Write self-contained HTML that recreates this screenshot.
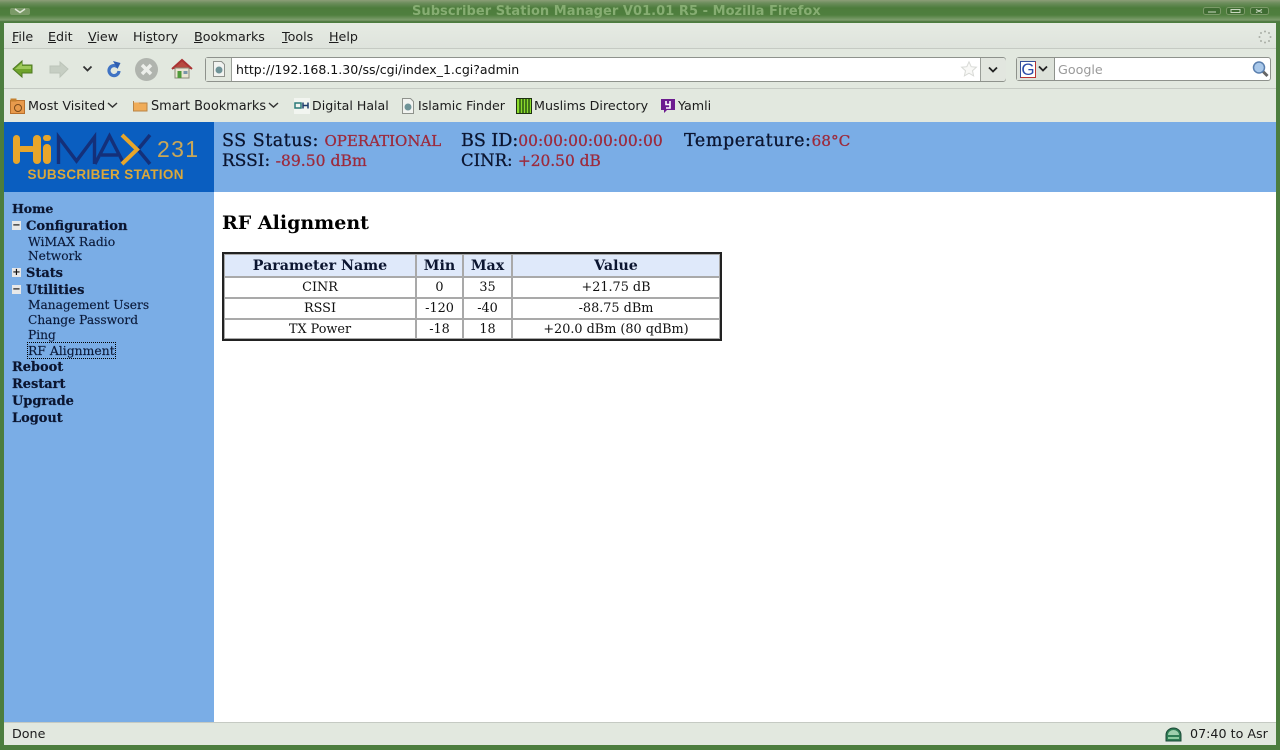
<!DOCTYPE html>
<html><head><meta charset="utf-8"><title>Subscriber Station Manager V01.01 R5 - Mozilla Firefox</title>
<style>
html,body{margin:0;padding:0;width:1280px;height:750px;overflow:hidden;background:#fff}
.a{position:absolute;white-space:nowrap}
.s{font-family:"DejaVu Sans","Liberation Sans",sans-serif;font-size:12.7px;color:#1c1c1c;line-height:16px}
.f{font-family:"DejaVu Serif","Liberation Serif",serif;color:#0b1530}
.h{-webkit-text-stroke:.3px currentColor}
.r{color:#9c2a3c}
.b{font-weight:bold;font-size:12.95px;line-height:17px;left:12px;-webkit-text-stroke:.2px currentColor}
.n{font-size:12.2px;line-height:15px;left:28px;color:#0b1a3a;-webkit-text-stroke:.15px currentColor}
.bx{position:absolute;left:12px;width:9px;height:9px;background:#e8e8e8;font:bold 10px/9px "DejaVu Sans",sans-serif;text-align:center;color:#111}
u{text-decoration:underline}
svg{position:absolute;overflow:visible}
td,th{padding:0;text-align:center;border:1px solid #a9a9a9}
</style></head>
<body>
<div class="a" style="left:0;top:0;width:1280px;height:750px;background:#4c7d3e"></div>
<div class="a" style="left:0;top:0;width:1280px;height:22px;background:linear-gradient(#8c9e78 0,#6c8d5c 3px,#4d7c3c 8px,#4f7f3e 15px,#7d9d6c 20px,#456f38 22px)"></div>
<div class="a" style="left:412px;top:4px;font:bold 13px/16px 'DejaVu Sans',sans-serif;color:#86ad72;letter-spacing:.04px">Subscriber Station Manager V01.01 R5 - Mozilla Firefox</div>
<svg style="left:0;top:0" width="40" height="22"><rect x="10" y="8" width="20" height="7" rx="2" fill="#7b9a68"/><path d="M15 9l5 3.500 5-3.500" stroke="#e0e8d8" stroke-width="1.500" fill="none"/></svg>
<svg style="left:1200px;top:5px" width="72" height="12"><g fill="#3f6c32" stroke="#7b9a68"><rect x="3.500" y="2.500" width="17" height="7" rx="2"/><rect x="26.500" y="2.500" width="18" height="7" rx="2"/><rect x="50.500" y="2.500" width="18" height="7" rx="2"/></g><path d="M8 7h8M31 4.500h9v3h-9zM56 4.500l6 3M62 4.500l-6 3" stroke="#c9d8c0" stroke-width="1" fill="none"/></svg>

<div class="a" style="left:4px;top:23px;width:1272px;height:99px;background:#e2e8df"></div>
<div class="a" style="left:4px;top:23px;width:1272px;height:26px;background:linear-gradient(#e6ebe3,#dee3dc)"></div>
<div class="a" style="left:4px;top:48px;width:1272px;height:1px;background:#c5cac3"></div>
<div class="a" style="left:4px;top:88px;width:1272px;height:1px;background:#c5cac3"></div>

<div class="a s" style="left:12px;top:29px"><u>F</u>ile</div>
<div class="a s" style="left:48px;top:29px"><u>E</u>dit</div>
<div class="a s" style="left:88px;top:29px"><u>V</u>iew</div>
<div class="a s" style="left:133px;top:29px">Hi<u>s</u>tory</div>
<div class="a s" style="left:194px;top:29px"><u>B</u>ookmarks</div>
<div class="a s" style="left:282px;top:29px"><u>T</u>ools</div>
<div class="a s" style="left:329px;top:29px"><u>H</u>elp</div>
<svg style="left:1258px;top:30px" width="14" height="14"><g fill="#a9aea6"><circle cx="7" cy="1.500" r="1"/><circle cx="11" cy="3" r="1"/><circle cx="12.500" cy="7" r="1"/><circle cx="11" cy="11" r="1"/><circle cx="7" cy="12.500" r="1"/><circle cx="3" cy="11" r="1"/><circle cx="1.500" cy="7" r="1"/><circle cx="3" cy="3" r="1"/></g></svg>

<!-- nav icons -->
<svg style="left:12px;top:59px" width="22" height="20"><path d="M1 10L10 2v4h10v8H10v4z" fill="#6fa32c" stroke="#4d7a22" stroke-width="1"/><path d="M3 10L10 4v3h9v3H3z" fill="#9cc85a"/></svg>
<svg style="left:49px;top:60px" width="20" height="18"><path d="M19 9L11 2v4H1v7h10v4z" fill="#c6cec3" stroke="#bcc4b9"/></svg>
<svg style="left:82px;top:65px" width="12" height="8"><path d="M1.500 1.500L5.500 5.500 9.500 1.500" stroke="#333" stroke-width="1.800" fill="none"/></svg>
<svg style="left:106px;top:61px" width="16" height="16"><path d="M11.500 6a5 5 0 1 0 1.500 4" stroke="#3f73c4" stroke-width="3.200" fill="none"/><path d="M7 0l7.500 2-3 6z" fill="#2f5fb0"/></svg>
<svg style="left:134px;top:57px" width="25" height="25"><circle cx="12.500" cy="12.500" r="11.500" fill="#b0b4ae"/><path d="M8 8l9 9M17 8l-9 9" stroke="#eceeea" stroke-width="3.500"/></svg>
<svg style="left:171px;top:58px" width="22" height="22"><path d="M1 11L11 2l10 9" fill="#b74a40" stroke="#a33" stroke-width="2"/><rect x="4" y="10" width="14" height="10" fill="#eae5d3" stroke="#8a8a78"/><rect x="6.500" y="13" width="4" height="7" fill="#4f9a3a"/><rect x="12.500" y="13" width="4" height="3" fill="#7a96aa"/></svg>

<!-- url bar -->
<div class="a" style="left:205px;top:57px;width:799px;height:23px;background:#fff;border:1px solid #8e928c;border-radius:3px"></div>
<div class="a" style="left:206px;top:58px;width:25px;height:23px;background:#e2e8df;border-right:1px solid #9a9e98"></div>
<svg style="left:212px;top:61px" width="14" height="16"><path d="M1.500.5h8l3 3v12h-11z" fill="#f1f3f0" stroke="#8e928c"/><circle cx="7" cy="9" r="3.500" fill="#6f9498"/></svg>
<div class="a s" style="left:236px;top:62px;color:#111;font-size:12.56px">http://192.168.1.30/ss/cgi/index_1.cgi?admin</div>
<svg style="left:961px;top:61px" width="16" height="16"><path d="M8 .8l2.200 4.900 5.200.5-3.900 3.500 1.100 5.200L8 12.200l-4.600 2.700 1.100-5.200L.6 6.200l5.200-.5z" fill="#f8f8f6" stroke="#d8dad6"/></svg>
<div class="a" style="left:980px;top:58px;width:25px;height:23px;background:#e2e6df;border-left:1px solid #9a9e98;border-radius:0 3px 3px 0"></div>
<svg style="left:988px;top:66px" width="12" height="8"><path d="M1 1.500L5 5.500 9 1.500" stroke="#222" stroke-width="1.800" fill="none"/></svg>

<!-- search -->
<div class="a" style="left:1016px;top:57px;width:253px;height:22px;background:#fff;border:1px solid #8e928c;border-radius:3px"></div>
<div class="a" style="left:1017px;top:58px;width:37px;height:22px;background:#dde2da;border-right:1px solid #8e928c"></div>
<div class="a" style="left:1020px;top:61px;width:14px;height:15px;background:#fff;border:1px solid #35509a;border-right-color:#b33;border-bottom-color:#b33;font:17px/15px 'Liberation Sans',sans-serif;color:#2a4aa8;text-align:center">G</div>
<svg style="left:1038px;top:65px" width="12" height="8"><path d="M1 1.500L5 5.500 9 1.500" stroke="#222" stroke-width="1.800" fill="none"/></svg>
<div class="a s" style="left:1058px;top:62px;color:#9a9a9a">Google</div>
<svg style="left:1252px;top:60px" width="17" height="18"><path d="M10.500 11l5 5" stroke="#666" stroke-width="3"/><circle cx="7" cy="7.500" r="5.500" fill="#a9c8ea" stroke="#5a7fae" stroke-width="1.500"/></svg>

<!-- bookmarks -->
<svg style="left:10px;top:98px" width="15" height="16"><rect x=".5" y="2.500" width="14" height="13" fill="#e89a4c" stroke="#b8702c"/><rect x=".5" y=".5" width="6" height="3" fill="#c4802e"/><circle cx="8" cy="10" r="3.500" fill="none" stroke="#7b4a1a"/></svg>
<div class="a s" style="left:28px;top:98px">Most Visited</div>
<svg style="left:107px;top:102px" width="12" height="8"><path d="M1 1L5.500 5 10 1" stroke="#333" stroke-width="1.500" fill="none"/></svg>
<svg style="left:133px;top:99px" width="15" height="13"><path d="M.5 2.500h5l1 1.500h7.500v8H.5z" fill="#f0ac58" stroke="#b98446"/><rect x="1" y="1.500" width="6" height="2" fill="#e2e2da"/></svg>
<div class="a s" style="left:151px;top:99px;font-size:12.9px">Smart Bookmarks</div>
<svg style="left:268px;top:102px" width="12" height="8"><path d="M1 1L5.500 5 10 1" stroke="#333" stroke-width="1.500" fill="none"/></svg>
<div class="a" style="left:294px;top:98px;width:16px;height:16px;background:#f2f5f0"></div>
<svg style="left:294px;top:102px" width="16" height="8"><rect x="1" y="1" width="6" height="5" fill="none" stroke="#2a7a78" stroke-width="1.500"/><path d="M9 .5v6M14 .500v6M9 3.500h5" stroke="#1b3b6a" stroke-width="1.500"/></svg>
<div class="a s" style="left:312px;top:98px;font-size:12.6px">Digital Halal</div>
<svg style="left:401px;top:98px" width="14" height="16"><path d="M1.500.5h8l3 3v12h-11z" fill="#f1f3f0" stroke="#8e928c"/><circle cx="7" cy="9" r="3.500" fill="#6f9498"/></svg>
<div class="a s" style="left:418px;top:98px;font-size:12.6px">Islamic Finder</div>
<svg style="left:516px;top:98px" width="16" height="16"><rect x=".5" y=".5" width="15" height="15" fill="#8bdc2c" stroke="#1c3010"/><path d="M4 1v14M7 1v14M10 1v14M13 1v14" stroke="#1c4010" stroke-width="1.300"/></svg>
<div class="a s" style="left:534px;top:98px">Muslims Directory</div>
<svg style="left:661px;top:98px" width="14" height="16"><path d="M0 1h14v11H6l-3 3v-3H0z" fill="#6c1b8f"/><path d="M5 3v3.500h4V3M9 3v7H5" stroke="#fff" stroke-width="1.600" fill="none"/></svg>
<div class="a s" style="left:678px;top:98px">Yamli</div>

<!-- page -->
<div class="a" style="left:4px;top:122px;width:1272px;height:600px;background:#fff"></div>
<div class="a" style="left:4px;top:122px;width:1272px;height:70px;background:#7aade6"></div>
<div class="a" style="left:4px;top:192px;width:210px;height:530px;background:#7aade6"></div>
<div class="a" style="left:4px;top:122px;width:210px;height:70px;background:#0a5ec0"></div>
<!-- logo -->
<svg style="left:4px;top:122px" width="210" height="70">
<g fill="#e8a62a"><rect x="9" y="13" width="7" height="29" rx="3.500"/><rect x="29" y="13" width="8" height="29" rx="4"/><rect x="15" y="24" width="15" height="6" rx="2"/><rect x="39" y="22" width="8" height="20" rx="4"/><rect x="39" y="13" width="8" height="6" rx="3"/></g>
<path d="M54.500 42V15l18 24 18-24v27" fill="none" stroke="#14307a" stroke-width="3.400"/>
<path d="M91 42L105.500 14 120 42M97 33h17" fill="none" stroke="#14307a" stroke-width="3.400"/>
<path d="M146 13L134 27.500 146 42" fill="none" stroke="#14307a" stroke-width="3.500"/>
<path d="M118 13L133 27.500 118 42" fill="none" stroke="#e8a62a" stroke-width="4"/>
<text x="153" y="35" font-family="Liberation Sans,sans-serif" font-size="23" fill="#c9a758" textLength="41">231</text>
<text x="23.500" y="57" font-family="Liberation Sans,sans-serif" font-size="13.500" font-weight="bold" fill="#dba83a" textLength="156">SUBSCRIBER STATION</text>
</svg>

<div class="a f h" style="left:222px;top:131px;font-size:17.5px;line-height:20px"><span style="letter-spacing:.5px">SS Status:</span> <span class="r" style="font-size:15px">OPERATIONAL</span></div>
<div class="a f h" style="left:222px;top:151px;font-size:17px;line-height:20px">RSSI: <span class="r" style="font-size:15.6px">-89.50 dBm</span></div>
<div class="a f h" style="left:461px;top:131px;font-size:17.5px;line-height:20px">BS ID:<span class="r" style="font-size:15.500px">00:00:00:00:00:00</span></div>
<div class="a f h" style="left:461px;top:151px;font-size:16.500px;line-height:20px">CINR: <span class="r" style="font-size:15.4px">+20.50 dB</span></div>
<div class="a f h" style="left:684px;top:131px;font-size:17.5px;line-height:20px"><span style="letter-spacing:.58px">Temperature:</span><span class="r" style="font-size:15.300px">68°C</span></div>

<div class="a f b" style="top:200px;font-size:12.5px">Home</div>
<div class="bx" style="top:221px">−</div>
<div class="a f b" style="top:218px;left:26px;font-size:13.100px">Configuration</div>
<div class="a f n" style="top:234px;font-size:12.4px">WiMAX Radio</div>
<div class="a f n" style="top:249px">Network</div>
<div class="bx" style="top:268px">+</div>
<div class="a f b" style="top:265px;left:26px">Stats</div>
<div class="bx" style="top:285px">−</div>
<div class="a f b" style="top:282px;left:26px">Utilities</div>
<div class="a f n" style="top:298px">Management Users</div>
<div class="a f n" style="top:313px">Change Password</div>
<div class="a f n" style="top:328px">Ping</div>
<div class="a f n" style="top:343px;font-size:12.4px;outline:1px dotted #000">RF Alignment</div>
<div class="a f b" style="top:359px">Reboot</div>
<div class="a f b" style="top:376px">Restart</div>
<div class="a f b" style="top:393px">Upgrade</div>
<div class="a f b" style="top:410px">Logout</div>

<div class="a f" style="left:222px;top:212px;font-size:19px;font-weight:bold;line-height:23px;color:#000">RF Alignment</div>

<table class="a f" style="left:222px;top:252px;width:500px;height:88px;border-collapse:separate;border-spacing:0;border:2px solid #222;font-size:12.8px;color:#111;table-layout:fixed;background:#fff">
<colgroup><col style="width:192px"><col style="width:47px"><col style="width:49px"><col></colgroup>
<tr style="height:23px;background:#dfe9fa;color:#0b1530;font-size:14.2px"><th>Parameter Name</th><th>Min</th><th>Max</th><th>Value</th></tr>
<tr style="height:21px"><td>CINR</td><td>0</td><td>35</td><td>+21.75 dB</td></tr>
<tr style="height:21px"><td>RSSI</td><td>-120</td><td>-40</td><td>-88.75 dBm</td></tr>
<tr style="height:20px"><td>TX Power</td><td>-18</td><td>18</td><td>+20.0 dBm (80 qdBm)</td></tr>
</table>

<!-- status bar -->
<div class="a" style="left:4px;top:722px;width:1272px;height:23px;background:#e2e8df;border-top:1px solid #c5cac3;box-sizing:border-box"></div>
<div class="a s" style="left:12px;top:726px">Done</div>
<svg style="left:1165px;top:727px" width="17" height="15"><path d="M1 14V8a7.500 7 0 0 1 15 0v6z" fill="#2f7d55" stroke="#1c4a38"/><path d="M3 8a5.500 5 0 0 1 11 0z" fill="#9fd0ae"/><rect x="3" y="10" width="11" height="2" fill="#8ccba0"/></svg>
<div class="a s" style="left:1190px;top:726px">07:40 to Asr</div>
</body></html>
